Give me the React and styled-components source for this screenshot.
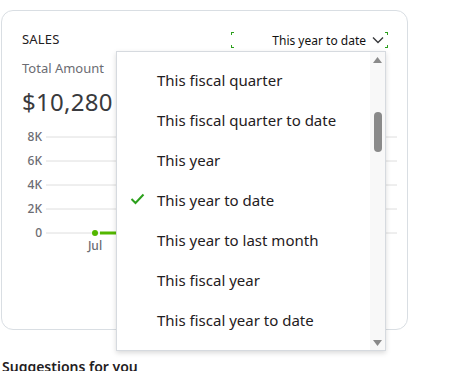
import styled, { createGlobalStyle } from "styled-components";

const GlobalStyle = createGlobalStyle`
  body {
    margin: 0;
    background: #fff;
    font-family: "Noto Sans", "Open Sans", sans-serif;
    color: #393a3d;
  }
`;

const Page = styled.div`
  width: 466px;
  height: 371px;
  overflow: hidden;
  padding: 10px 0 0 1px;
  box-sizing: border-box;
`;

const Card = styled.div`
  position: relative;
  width: 407px;
  height: 320px;
  box-sizing: border-box;
  border: 1px solid #d9dee3;
  border-radius: 12px;
  padding: 19px 20px 0 20px;
`;

const Header = styled.div`
  display: flex;
  align-items: center;
  justify-content: space-between;
  height: 18px;
`;

const Title = styled.div`
  font-size: 13px;
  color: #1f2022;
  letter-spacing: 0.2px;
`;

const corner = "#2ca01c";

const Trigger = styled.div`
  display: flex;
  align-items: center;
  justify-content: flex-end;
  gap: 6px;
  width: 157px;
  height: 16px;
  margin-right: -1px;
  margin-top: 2px;
  padding-right: 4px;
  box-sizing: border-box;
  font-size: 12px;
  color: #111;
  background:
    linear-gradient(${corner}, ${corner}) left top / 3px 1px no-repeat,
    linear-gradient(${corner}, ${corner}) left top / 1px 3px no-repeat,
    linear-gradient(${corner}, ${corner}) right top / 3px 1px no-repeat,
    linear-gradient(${corner}, ${corner}) right top / 1px 3px no-repeat,
    linear-gradient(${corner}, ${corner}) left bottom / 3px 1px no-repeat,
    linear-gradient(${corner}, ${corner}) left bottom / 1px 3px no-repeat,
    linear-gradient(${corner}, ${corner}) right bottom / 3px 1px no-repeat,
    linear-gradient(${corner}, ${corner}) right bottom / 1px 3px no-repeat;
`;

const Label = styled.div`
  margin-top: 11px;
  font-size: 13px;
  color: #6b6c72;
`;

const Amount = styled.div`
  margin-top: 8px;
  font-size: 24px;
  color: #393a3d;
  letter-spacing: 0.3px;
`;

const Chart = styled.svg`
  display: block;
  margin: 11px 0 0 -20px;
`;

const Menu = styled.div`
  position: absolute;
  left: 114px;
  top: 40px;
  width: 270px;
  height: 300px;
  box-sizing: border-box;
  background: #fff;
  border: 1px solid #d6dadf;
  box-shadow: 0 2px 5px rgba(0, 0, 0, 0.15);
  display: flex;
  overflow: hidden;
`;

const List = styled.ul`
  list-style: none;
  margin: 0;
  padding: 8px 0 0 0;
  flex: 1;
`;

const Item = styled.li`
  position: relative;
  height: 40px;
  display: flex;
  align-items: center;
  padding-left: 40px;
  font-size: 15px;
  color: #1f2022;
  white-space: nowrap;
`;

const Check = styled.svg`
  position: absolute;
  left: 13px;
  top: 13px;
`;

const Scrollbar = styled.div`
  width: 15px;
  background: #f8f8f8;
  display: flex;
  flex-direction: column;
  align-items: center;
  justify-content: space-between;
  padding: 5px 0 4px;
  box-sizing: border-box;
`;

const Thumb = styled.div`
  width: 8px;
  height: 40px;
  border-radius: 4px;
  background: #8a8a8a;
  margin-top: 49px;
`;

const Spacer = styled.div`
  flex: 1;
`;

const Suggestions = styled.div`
  margin: 27px 0 0 1px;
  font-size: 14px;
  font-weight: 600;
  color: #1f2022;
`;

const options = [
  "This fiscal quarter",
  "This fiscal quarter to date",
  "This year",
  "This year to date",
  "This year to last month",
  "This fiscal year",
  "This fiscal year to date",
];

const ticks = ["8K", "6K", "4K", "2K", "0"];

export default function App() {
  return (
    <>
      <GlobalStyle />
      <Page>
        <Card>
          <Header>
            <Title>SALES</Title>
            <Trigger>
              This year to date
              <svg width="12" height="8" viewBox="0 0 12 8">
                <path d="M1 1.5 L6 6.5 L11 1.5" fill="none" stroke="#393a3d" strokeWidth="1.4" />
              </svg>
            </Trigger>
          </Header>
          <Label>Total Amount</Label>
          <Amount>$10,280</Amount>
          <Chart width="400" height="125" viewBox="0 0 400 125">
            {ticks.map((t, i) => (
              <g key={t}>
                <text
                  x="40"
                  y={12 + i * 24}
                  textAnchor="end"
                  fontSize="12"
                  fontWeight="500"
                  fill="#6b6c72"
                  fontFamily="Noto Sans, sans-serif"
                >
                  {t}
                </text>
                <line x1="44" x2="395" y1={8 + i * 24} y2={8 + i * 24} stroke="#dedede" strokeWidth="1" />
              </g>
            ))}
            <text x="93" y="121" textAnchor="middle" fontSize="12" fontWeight="500" fill="#6b6c72" fontFamily="Noto Sans, sans-serif">
              Jul
            </text>
            <circle cx="93" cy="104" r="3" fill="#53b700" />
            <line x1="98" x2="140" y1="104" y2="104" stroke="#53b700" strokeWidth="3" />
          </Chart>
          <Menu>
            <List>
              {options.map((o) => (
                <Item key={o}>
                  {o === "This year to date" && (
                    <Check width="15" height="12" viewBox="0 0 15 12">
                      <path d="M1.5 6 L5.5 10 L13.5 1.5" fill="none" stroke="#2ca01c" strokeWidth="2" />
                    </Check>
                  )}
                  {o}
                </Item>
              ))}
            </List>
            <Scrollbar>
              <svg width="9" height="6" viewBox="0 0 9 6">
                <path d="M0 6 L4.5 0 L9 6 Z" fill="#8a8a8a" />
              </svg>
              <Thumb />
              <Spacer />
              <svg width="9" height="6" viewBox="0 0 9 6">
                <path d="M0 0 L4.5 6 L9 0 Z" fill="#8a8a8a" />
              </svg>
            </Scrollbar>
          </Menu>
        </Card>
        <Suggestions>Suggestions for you</Suggestions>
      </Page>
    </>
  );
}
